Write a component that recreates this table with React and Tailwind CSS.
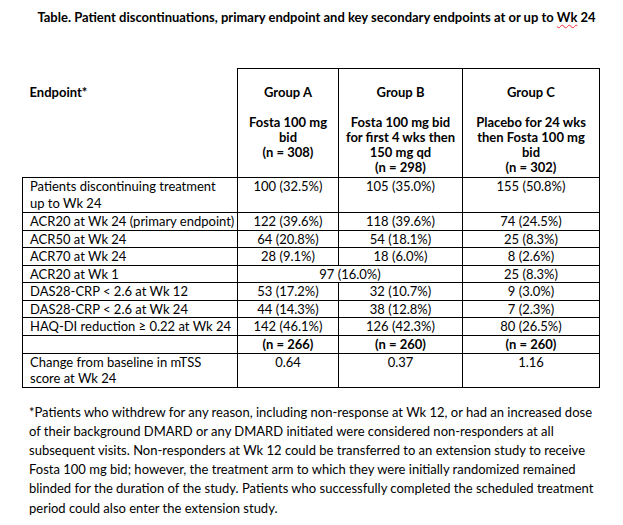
import React from "react";

const rows = [
  { label: ["Patients discontinuing treatment", "up to Wk 24"], a: "100 (32.5%)", b: "105 (35.0%)", c: "155 (50.8%)", tall: true },
  { label: ["ACR20 at Wk 24 (primary endpoint)"], a: "122 (39.6%)", b: "118 (39.6%)", c: "74 (24.5%)" },
  { label: ["ACR50 at Wk 24"], a: "64 (20.8%)", b: "54 (18.1%)", c: "25 (8.3%)" },
  { label: ["ACR70 at Wk 24"], a: "28 (9.1%)", b: "18 (6.0%)", c: "8 (2.6%)" },
  { label: ["ACR20 at Wk 1"], ab: "97 (16.0%)", c: "25 (8.3%)" },
  { label: ["DAS28-CRP < 2.6 at Wk 12"], a: "53 (17.2%)", b: "32 (10.7%)", c: "9 (3.0%)" },
  { label: ["DAS28-CRP < 2.6 at Wk 24"], a: "44 (14.3%)", b: "38 (12.8%)", c: "7 (2.3%)" },
  { label: ["HAQ-DI reduction \u2265 0.22 at Wk 24"], a: "142 (46.1%)", b: "126 (42.3%)", c: "80 (26.5%)" },
];

export default function App() {
  const cell = "border border-black align-top p-0";
  return (
    <div className="w-[623px] h-[525px] bg-white text-black font-['Lato',sans-serif] overflow-hidden">
      <div className="pt-[8px] pl-[10px] text-center font-bold text-[13px] leading-[18px]">
        Table. Patient discontinuations, primary endpoint and key secondary endpoints at or up to{" "}
        <span className="underline decoration-wavy decoration-red-500 decoration-1 underline-offset-2">Wk</span> 24
      </div>

      <table className="ml-[22px] mt-[42px] border-collapse table-fixed w-[577px] text-[13px] leading-[16.5px]">
        <colgroup>
          <col className="w-[215px]" />
          <col className="w-[101px]" />
          <col className="w-[124px]" />
          <col className="w-[137px]" />
        </colgroup>
        <thead>
          <tr className="h-[109px] leading-[15px] font-bold">
            <th className="align-top p-0 pt-[16px] pl-[7px] text-left border-b border-black">Endpoint*</th>
            <th className={`${cell} pt-[16px] text-center`}>
              Group A<br /><br />Fosta 100 mg<br />bid<br />(n = 308)
            </th>
            <th className={`${cell} pt-[16px] text-center`}>
              Group B<br /><br />Fosta 100 mg bid<br />for first 4 wks then<br />150 mg qd<br />(n = 298)
            </th>
            <th className={`${cell} pt-[16px] text-center`}>
              Group C<br /><br />Placebo for 24 wks<br />then Fosta 100 mg<br />bid<br />(n = 302)
            </th>
          </tr>
        </thead>
        <tbody>
          {rows.map((r, i) => (
            <tr key={i} className={r.tall ? "h-[35px]" : "h-[17.5px]"}>
              <td className={`${cell} pl-[7px]`}>
                {r.label.map((l, j) => (
                  <div key={j} className={r.tall ? "leading-[17px]" : ""}>{l}</div>
                ))}
              </td>
              {r.ab ? (
                <td colSpan={2} className={`${cell} text-center`}>{r.ab}</td>
              ) : (
                <>
                  <td className={`${cell} text-center`}>{r.a}</td>
                  <td className={`${cell} text-center`}>{r.b}</td>
                </>
              )}
              <td className={`${cell} text-center`}>{r.c}</td>
            </tr>
          ))}
          <tr className="h-[18px] font-bold">
            <td className={cell}></td>
            <td className={`${cell} text-center`}>(n = 266)</td>
            <td className={`${cell} text-center`}>(n = 260)</td>
            <td className={`${cell} text-center`}>(n = 260)</td>
          </tr>
          <tr className="h-[34px]">
            <td className={`${cell} pl-[7px]`}>
              <div>Change from baseline in mTSS</div>
              <div>score at Wk 24</div>
            </td>
            <td className={`${cell} text-center`}>0.64</td>
            <td className={`${cell} text-center`}>0.37</td>
            <td className={`${cell} text-center`}>1.16</td>
          </tr>
        </tbody>
      </table>

      <div className="mt-[15px] pl-[29px] text-[13px] leading-[19.2px] whitespace-nowrap">
        <div>*Patients who withdrew for any reason, including non-response at Wk 12, or had an increased dose</div>
        <div>of their background DMARD or any DMARD initiated were considered non-responders at all</div>
        <div>subsequent visits. Non-responders at Wk 12 could be transferred to an extension study to receive</div>
        <div>Fosta 100 mg bid; however, the treatment arm to which they were initially randomized remained</div>
        <div>blinded for the duration of the study. Patients who successfully completed the scheduled treatment</div>
        <div>period could also enter the extension study.</div>
      </div>
    </div>
  );
}
